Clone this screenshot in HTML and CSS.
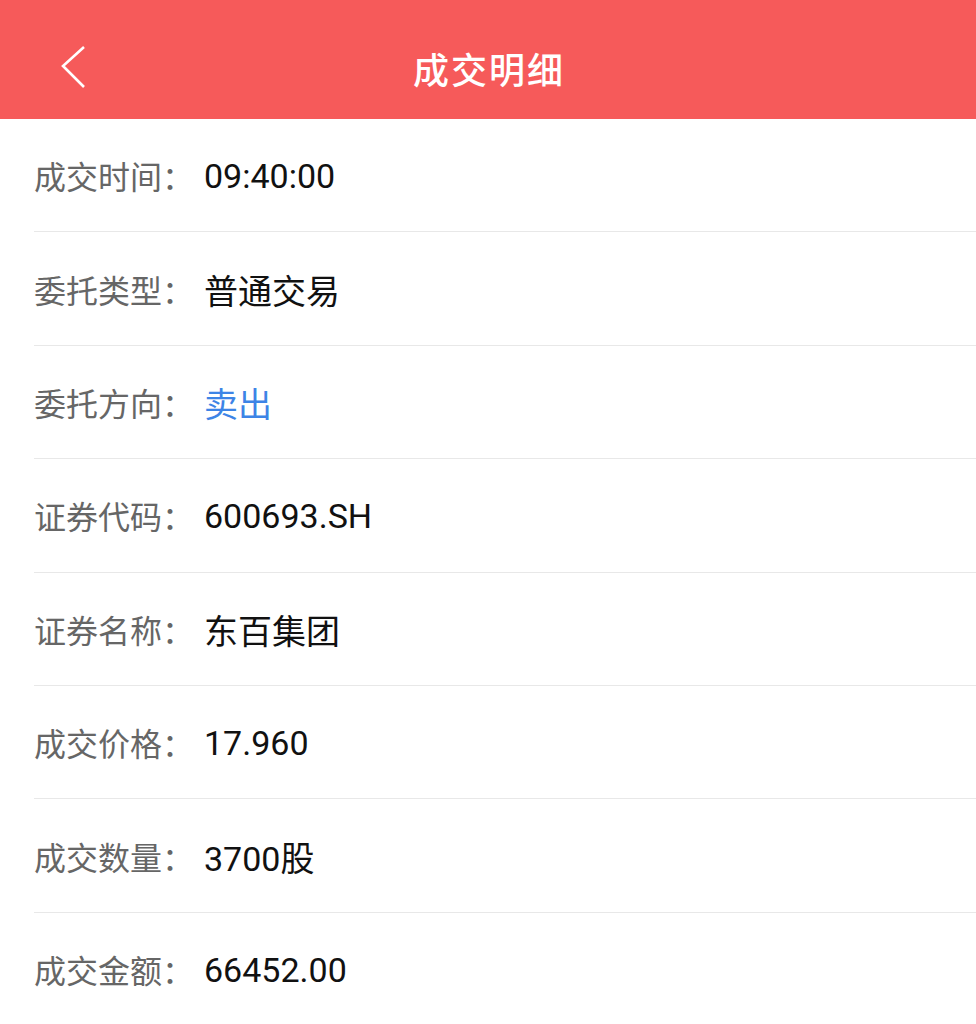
FILE: index.html
```html
<!DOCTYPE html>
<html lang="zh-CN">
<head>
    <meta charset="UTF-8">
    <meta name="viewport" content="width=device-width, initial-scale=1.0">
    <title>成交明细</title>
    <link rel="stylesheet" href="styles.css">
</head>
<body>
<header class="top-bar">
    <a class="back-btn" href="#" aria-label="返回">
        <svg width="30" height="50" viewBox="0 0 30 50">
            <polyline points="25,3 4,22 25,43" fill="none" stroke="#ffffff" stroke-width="2.6"/>
        </svg>
    </a>
    <h1 class="page-title">成交明细</h1>
</header>

<ul class="detail-list">
    <li class="detail-row"><span class="label">成交时间：</span><span class="value">09:40:00</span></li>
    <li class="detail-row"><span class="label">委托类型：</span><span class="value">普通交易</span></li>
    <li class="detail-row"><span class="label">委托方向：</span><span class="value sell">卖出</span></li>
    <li class="detail-row"><span class="label">证券代码：</span><span class="value">600693.SH</span></li>
    <li class="detail-row"><span class="label">证券名称：</span><span class="value">东百集团</span></li>
    <li class="detail-row"><span class="label">成交价格：</span><span class="value">17.960</span></li>
    <li class="detail-row"><span class="label">成交数量：</span><span class="value">3700股</span></li>
    <li class="detail-row"><span class="label">成交金额：</span><span class="value">66452.00</span></li>
</ul>
</body>
</html>
```

FILE: styles.css
```css
body {
    margin: 0;
    font-family: Roboto, "Noto Sans CJK SC", sans-serif;
    background-color: #ffffff;
    color: #111111;
}
.top-bar {
    position: relative;
    height: 119px;
    background-color: #f65a5a;
    display: flex;
    align-items: center;
    justify-content: center;
}
.back-btn {
    position: absolute;
    left: 59px;
    top: 44px;
    display: block;
    width: 30px;
    height: 50px;
}
.back-btn svg {
    display: block;
}
.page-title {
    margin: 0;
    color: #ffffff;
    font-family: "Noto Sans CJK SC", sans-serif;
    font-size: 36px;
    font-weight: 500;
    letter-spacing: 2px;
    line-height: 1;
    padding-top: 16px;
    padding-left: 2px;
}
.detail-list {
    list-style: none;
    margin: 0;
    padding: 0 0 0 34px;
}
.detail-row {
    height: 112.4px;
    border-bottom: 1px solid #e8e8e8;
    display: flex;
    align-items: center;
}
.detail-row:last-child {
    border-bottom: none;
}
.label {
    font-family: "Noto Sans CJK SC", sans-serif;
    font-size: 32px;
    color: #666666;
    margin-right: 10px;
}
.value {
    font-size: 34px;
    color: #111111;
    padding-top: 2px;
}
.sell {
    color: #3d84e6;
}
```
